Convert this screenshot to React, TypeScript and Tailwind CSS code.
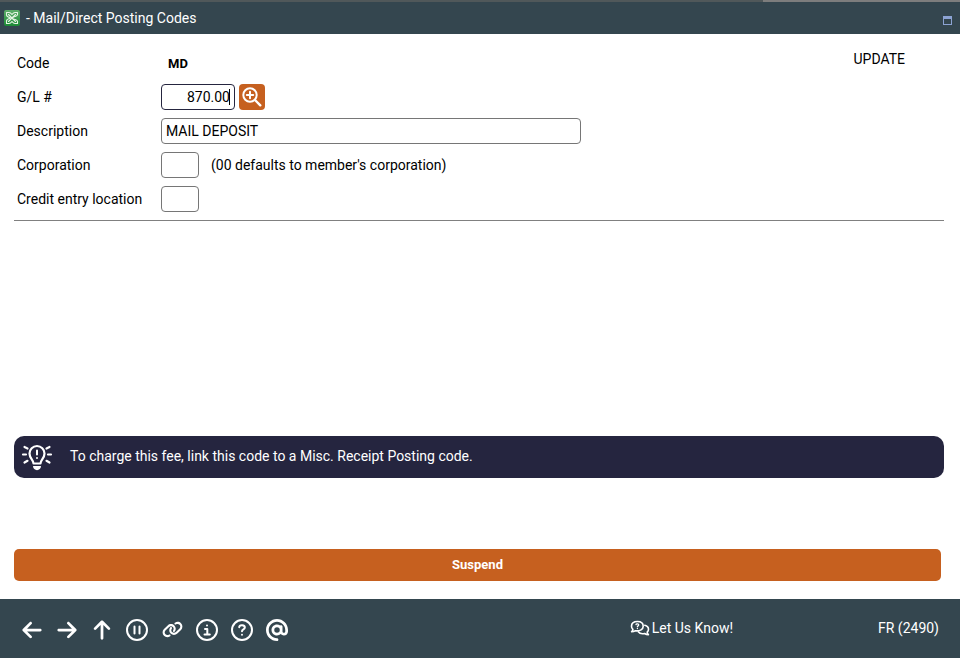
import React from "react";
import { FaArrowLeft, FaArrowRight, FaArrowUp, FaAt, FaLink } from "react-icons/fa6";

type IconProps = { children: React.ReactNode; label: string };

function ToolButton({ children, label }: IconProps) {
  return (
    <button type="button" aria-label={label} className="flex size-6 items-center justify-center">
      {children}
    </button>
  );
}

function CircleIcon({ children }: { children: React.ReactNode }) {
  return (
    <svg
      viewBox="0 0 24 24"
      className="size-6"
      fill="none"
      stroke="currentColor"
      strokeWidth="2"
      strokeLinecap="round"
      strokeLinejoin="round"
    >
      <circle cx="12" cy="12" r="10" />
      {children}
    </svg>
  );
}

function AppLogo() {
  return (
    <svg viewBox="0 0 16 16" className="size-4" fill="none" aria-hidden="true">
      <defs>
        <linearGradient id="logo" x1="0" y1="0" x2="0" y2="1">
          <stop offset="0" stopColor="#5fae6b" />
          <stop offset="1" stopColor="#1b8a35" />
        </linearGradient>
      </defs>
      <rect width="16" height="16" rx="2" fill="url(#logo)" />
      <g stroke="#e6f5e4" strokeWidth="1.1" strokeLinecap="round" strokeLinejoin="round">
        <path d="M5 2.500H2.500V5C2.500 7 5.500 7.300 8 8.500C10 9.500 13.500 9.500 13.500 11.500V13.500H11C9.500 13.500 8 11.500 8 11.500C8 11.500 6.500 13.500 5 13.500H2.500V11C2.500 9 5.500 8.700 8 7.500C10 6.500 13.500 6.500 13.500 4.500V2.500H11C9.500 2.500 8 4.500 8 4.500C8 4.500 6.500 2.500 5 2.500Z" />
        <path d="M4.500 4.500L11.500 11.500M11.500 4.500L4.500 11.500" />
      </g>
    </svg>
  );
}

function BulbIcon() {
  return (
    <svg viewBox="0 0 32 28" className="h-7 w-8 shrink-0" fill="none" stroke="white" strokeWidth="2.200" strokeLinecap="round" aria-hidden="true">
      <path d="M12.500 20.500C12.500 17 8.500 15.500 8.500 10.500A7.500 7.500 0 0 1 23.500 10.500C23.500 15.500 19.500 17 19.500 20.500Z" strokeLinejoin="round" />
      <path d="M12 23H20C20 28.500 12 28.500 12 23Z" fill="white" stroke="none" />
      <path d="M16 7.500V11.500M16 15V15.100" strokeWidth="2" />
      <path d="M2 11.500H5M27 11.500H30M3.500 4L6.500 5.500M28.500 4L25.500 5.500M3.500 19.500L6.500 17.800M28.500 19.500L25.500 17.800" />
    </svg>
  );
}

const label = "w-[147px] shrink-0 pl-[3px]";
const field = "h-[26px] rounded border border-[#767676] bg-white px-1 outline-none";
const row = "flex h-[34px] items-center";

export default function App() {
  return (
    <div className="flex min-h-screen flex-col bg-white font-['Roboto','Liberation_Sans',sans-serif] text-sm text-black">
      <header>
        <div className="flex h-[2px] bg-[#50585a]">
          <div className="ml-auto w-[197px] bg-[#7d7d7d]" />
        </div>
        <div className="flex h-8 items-center justify-between bg-[#34464f] pr-2 pl-1 text-white">
          <h1 className="flex items-center gap-[6px]">
            <AppLogo />
            <span>- Mail/Direct Posting Codes</span>
          </h1>
          <button type="button" aria-label="Maximize" className="mt-[5px] h-[9px] w-[9px] border border-t-[3px] border-[#8ca3d3]" />
        </div>
      </header>

      <main className="flex flex-1 flex-col pt-3 pr-4 pb-[18px] pl-[14px]">
        <div className="flex items-start justify-between border-b border-[#808080] pb-1">
          <form className="flex-1" onSubmit={(e) => e.preventDefault()}>
            <div className={row}>
              <span className={label}>Code</span>
              <b className="pt-[2px] pl-[7px] text-[13px]">MD</b>
            </div>
            <div className={row}>
              <label htmlFor="gl" className={label}>G/L #</label>
              <div className="relative h-[26px]">
                <input
                  id="gl"
                  defaultValue="870.00"
                  className="h-[26px] w-[74px] rounded border border-[#25253f] bg-white px-1 text-right outline-none"
                />
                <span className="absolute top-[5px] right-[5px] h-4 w-px bg-black" />
              </div>
              <button type="button" aria-label="Look up G/L number" className="ml-1 flex size-[26px] items-center justify-center rounded bg-[#c6601f] text-white">
                <svg viewBox="0 0 20 20" className="size-5" fill="none" stroke="currentColor" strokeWidth="2" strokeLinecap="round">
                  <circle cx="8" cy="8" r="6.700" />
                  <path d="M13 13L18.300 18.300" strokeWidth="2.400" />
                  <path d="M8 4.800V11.200M4.800 8H11.200" />
                </svg>
              </button>
            </div>
            <div className={row}>
              <label htmlFor="description" className={label}>Description</label>
              <input id="description" defaultValue="MAIL DEPOSIT" className={`${field} w-[420px]`} />
            </div>
            <div className={row}>
              <label htmlFor="corporation" className={label}>Corporation</label>
              <input id="corporation" className={`${field} w-[38px]`} />
              <span className="ml-3">(00 defaults to member's corporation)</span>
            </div>
            <div className={row}>
              <label htmlFor="location" className={label}>Credit entry location</label>
              <input id="location" className={`${field} w-[38px]`} />
            </div>
          </form>
          <span className="mt-[3px] mr-[39px]">UPDATE</span>
        </div>

        <div className="mt-auto flex h-[42px] items-center gap-[17px] rounded-[10px] bg-[#25253f] px-[7px] text-white">
          <BulbIcon />
          <p className="pb-[2px]">To charge this fee, link this code to a Misc. Receipt Posting code.</p>
        </div>

        <button type="button" className="mt-[71px] mr-[3px] h-8 rounded-[5px] bg-[#c6601f] text-[13px] font-bold text-white">
          Suspend
        </button>
      </main>

      <footer className="flex h-[59px] items-center bg-[#34464f] pr-[21px] pb-px pl-5 text-white">
        <nav className="flex items-center gap-[11px] pt-[3px]" aria-label="Tools">
          <ToolButton label="Back">
            <FaArrowLeft size={22} />
          </ToolButton>
          <ToolButton label="Forward">
            <FaArrowRight size={22} />
          </ToolButton>
          <ToolButton label="Up">
            <FaArrowUp size={22} />
          </ToolButton>
          <ToolButton label="Pause">
            <CircleIcon>
              <path d="M9.500 8.500V15.500M14.500 8.500V15.500" />
            </CircleIcon>
          </ToolButton>
          <ToolButton label="Link">
            <FaLink size={21} />
          </ToolButton>
          <ToolButton label="Information">
            <CircleIcon>
              <path d="M10 11H12.300V16.300M9.500 16.500H14.800M12 7.400V7.500" />
            </CircleIcon>
          </ToolButton>
          <ToolButton label="Help">
            <CircleIcon>
              <path d="M9.200 9.200C9.500 6.200 15 6.700 14.800 9.600C14.700 11.400 12 11.300 12 13.300M12 16.700V16.800" />
            </CircleIcon>
          </ToolButton>
          <ToolButton label="Contact">
            <FaAt size={22} />
          </ToolButton>
        </nav>
        <button type="button" className="ml-auto flex items-center gap-[2px]">
          <svg viewBox="0 0 20 16" className="h-4 w-5" fill="none" stroke="currentColor" strokeWidth="1.600" strokeLinecap="round" strokeLinejoin="round">
            <path d="M7.500 1.500C3.800 1.500 1.500 3.500 1.500 6.200C1.500 7.500 2 8.600 2.900 9.400C2.800 10.400 2.200 11.200 1.600 11.800C3.200 11.800 4.600 11.300 5.500 10.700C10 11.500 13.200 9.200 13.200 6.200C13.200 3.500 11 1.500 7.500 1.500Z" />
            <path d="M14.800 5.200C17 5.700 18.500 7.400 18.500 9.300C18.500 10.500 18 11.500 17.200 12.200C17.300 13.300 17.900 14 18.400 14.600C16.900 14.600 15.500 14.100 14.500 13.500C11.700 14.100 9.300 13.200 8.300 11.800" />
            <path d="M6 4.700C6.200 3.400 8.900 3.600 8.700 5C8.600 5.900 7.400 5.900 7.400 6.700M7.400 8.500V8.600" strokeWidth="1.300" />
          </svg>
          <span>Let Us Know!</span>
        </button>
        <span className="ml-[145px]">FR (2490)</span>
      </footer>
    </div>
  );
}
